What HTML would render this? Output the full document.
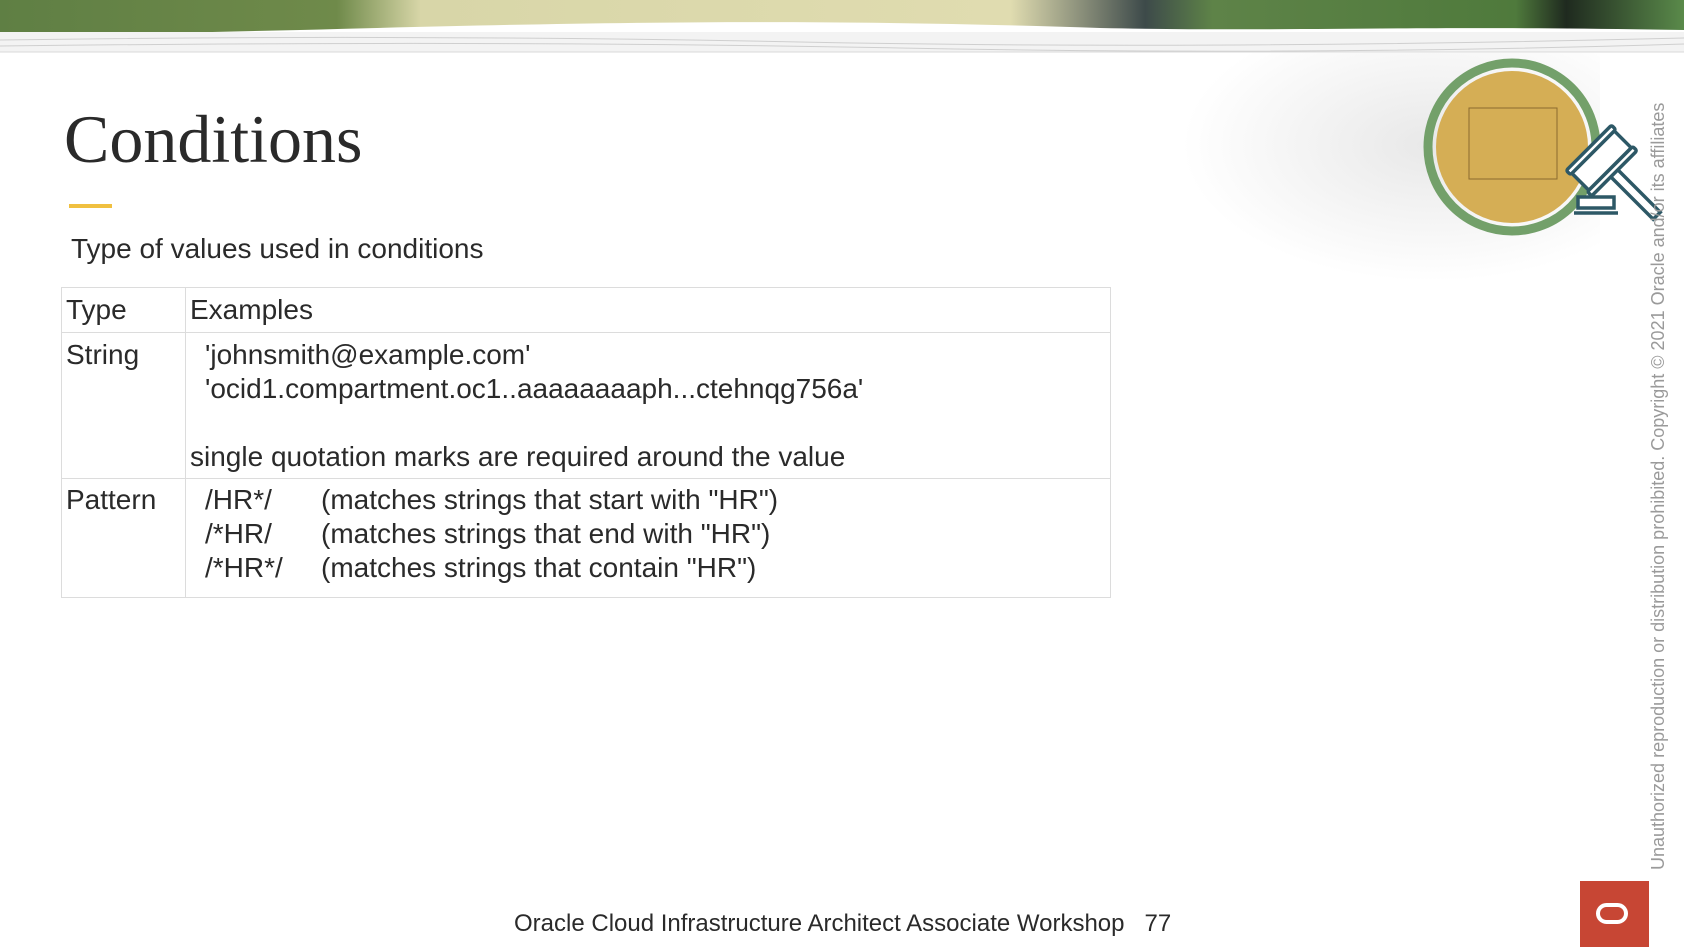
<!DOCTYPE html>
<html><head><style>
body{margin:0;width:1684px;height:947px;overflow:hidden;background:#fff;font-family:"Liberation Sans",sans-serif;color:#222;position:relative}
.a{position:absolute}
table{border-collapse:collapse;position:absolute;left:61px;top:287px;width:1050px;font-size:28px;color:#2a2a2a}
td{border:1px solid #dcdcdc;vertical-align:top;padding:0 4px;line-height:34px}
</style></head><body>
<svg class="a" style="left:0;top:0" width="1684" height="60">
<defs><linearGradient id="g" x1="0" x2="1"><stop offset="0" stop-color="#5f7f44"/><stop offset=".2" stop-color="#6f8a4a"/><stop offset=".25" stop-color="#d8d6a8"/><stop offset=".6" stop-color="#e0dcb0"/><stop offset=".68" stop-color="#3d4a4a"/><stop offset=".72" stop-color="#5e8348"/><stop offset=".9" stop-color="#4f7a3c"/><stop offset=".93" stop-color="#1f2a1f"/><stop offset="1" stop-color="#5a8a4a"/></linearGradient></defs>
<path d="M0 0H1684V30C1400 25 1300 32 1100 28C800 18 600 22 300 30C200 32 100 36 0 32Z" fill="url(#g)"/>
<rect x="0" y="32" width="1684" height="20" fill="#f3f3f3"/>
<g stroke="#cfcfcf" stroke-width="1" fill="none"><path d="M0 40 Q400 34 800 42 T1684 38"/><path d="M0 46 Q500 40 900 48 T1684 44"/></g>
<line x1="0" y1="52" x2="1684" y2="52" stroke="#d8d8d8"/>
</svg>
<div class="a" style="left:1180px;top:53px;width:420px;height:230px;background:radial-gradient(ellipse at 60% 40%,#e8e8e8,rgba(255,255,255,0) 70%)"></div>
<svg class="a" style="left:1420px;top:55px" width="260" height="190">
<circle cx="92" cy="92" r="84" fill="none" stroke="#73a06a" stroke-width="9"/>
<circle cx="92" cy="92" r="76" fill="#d5ae55"/>
<rect x="49" y="53" width="88" height="71" fill="none" stroke="#8a6a30"/>
<g fill="#fff" stroke="#2d5866" stroke-width="3.5">
<g transform="translate(183,107) rotate(45)">
<rect x="0" y="-5" width="76" height="10"/>
<rect x="-14" y="-30" width="24" height="60" rx="2"/>
<rect x="-20" y="-32" width="6" height="64" rx="2"/>
<rect x="10" y="-32" width="6" height="64" rx="2"/>
</g>
<rect x="158" y="142" width="36" height="11"/>
<line x1="154" y1="158" x2="198" y2="158"/>
</g>
</svg>
<div class="a" style="left:64px;top:100px;font-family:'Liberation Serif',serif;font-size:68px;color:#2a2a2a">Conditions</div>
<div class="a" style="left:69px;top:204px;width:43px;height:4px;background:#f0c040"></div>
<div class="a" style="left:71px;top:233px;font-size:28px;color:#2a2a2a">Type of values used in conditions</div>
<table>
<tr><td style="width:115px;height:44px;line-height:44px">Type</td><td style="line-height:44px">Examples</td></tr>
<tr><td style="height:140px;padding-top:5px">String</td><td style="padding-top:5px"><div style="padding-left:15px">'johnsmith@example.com'<br>'ocid1.compartment.oc1..aaaaaaaaph...ctehnqg756a'<br>&nbsp;</div>single quotation marks are required around the value</td></tr>
<tr><td style="height:114px;padding-top:4px">Pattern</td><td style="padding-top:4px;padding-left:19px"><span style="display:inline-block;width:116px">/HR*/</span>(matches strings that start with "HR")<br><span style="display:inline-block;width:116px">/*HR/</span>(matches strings that end with "HR")<br><span style="display:inline-block;width:116px">/*HR*/</span>(matches strings that contain "HR")</td></tr>
</table>
<div class="a" style="left:514px;top:910px;font-size:24px;color:#2a2a2a;white-space:nowrap">Oracle Cloud Infrastructure Architect Associate Workshop&nbsp;&nbsp;&nbsp;77</div>
<div class="a" style="left:1580px;top:881px;width:69px;height:66px;background:#c74634"></div>
<div class="a" style="left:1596px;top:903px;width:32px;height:21px;border:4px solid #fff;border-radius:12px;box-sizing:border-box"></div>
<div class="a" style="left:1648px;top:870px;transform:rotate(-90deg);transform-origin:0 0;font-size:18px;color:#9a9a9a;white-space:nowrap;width:800px">Unauthorized reproduction or distribution prohibited. Copyright © 2021 Oracle and/or its affiliates</div>
</body></html>
